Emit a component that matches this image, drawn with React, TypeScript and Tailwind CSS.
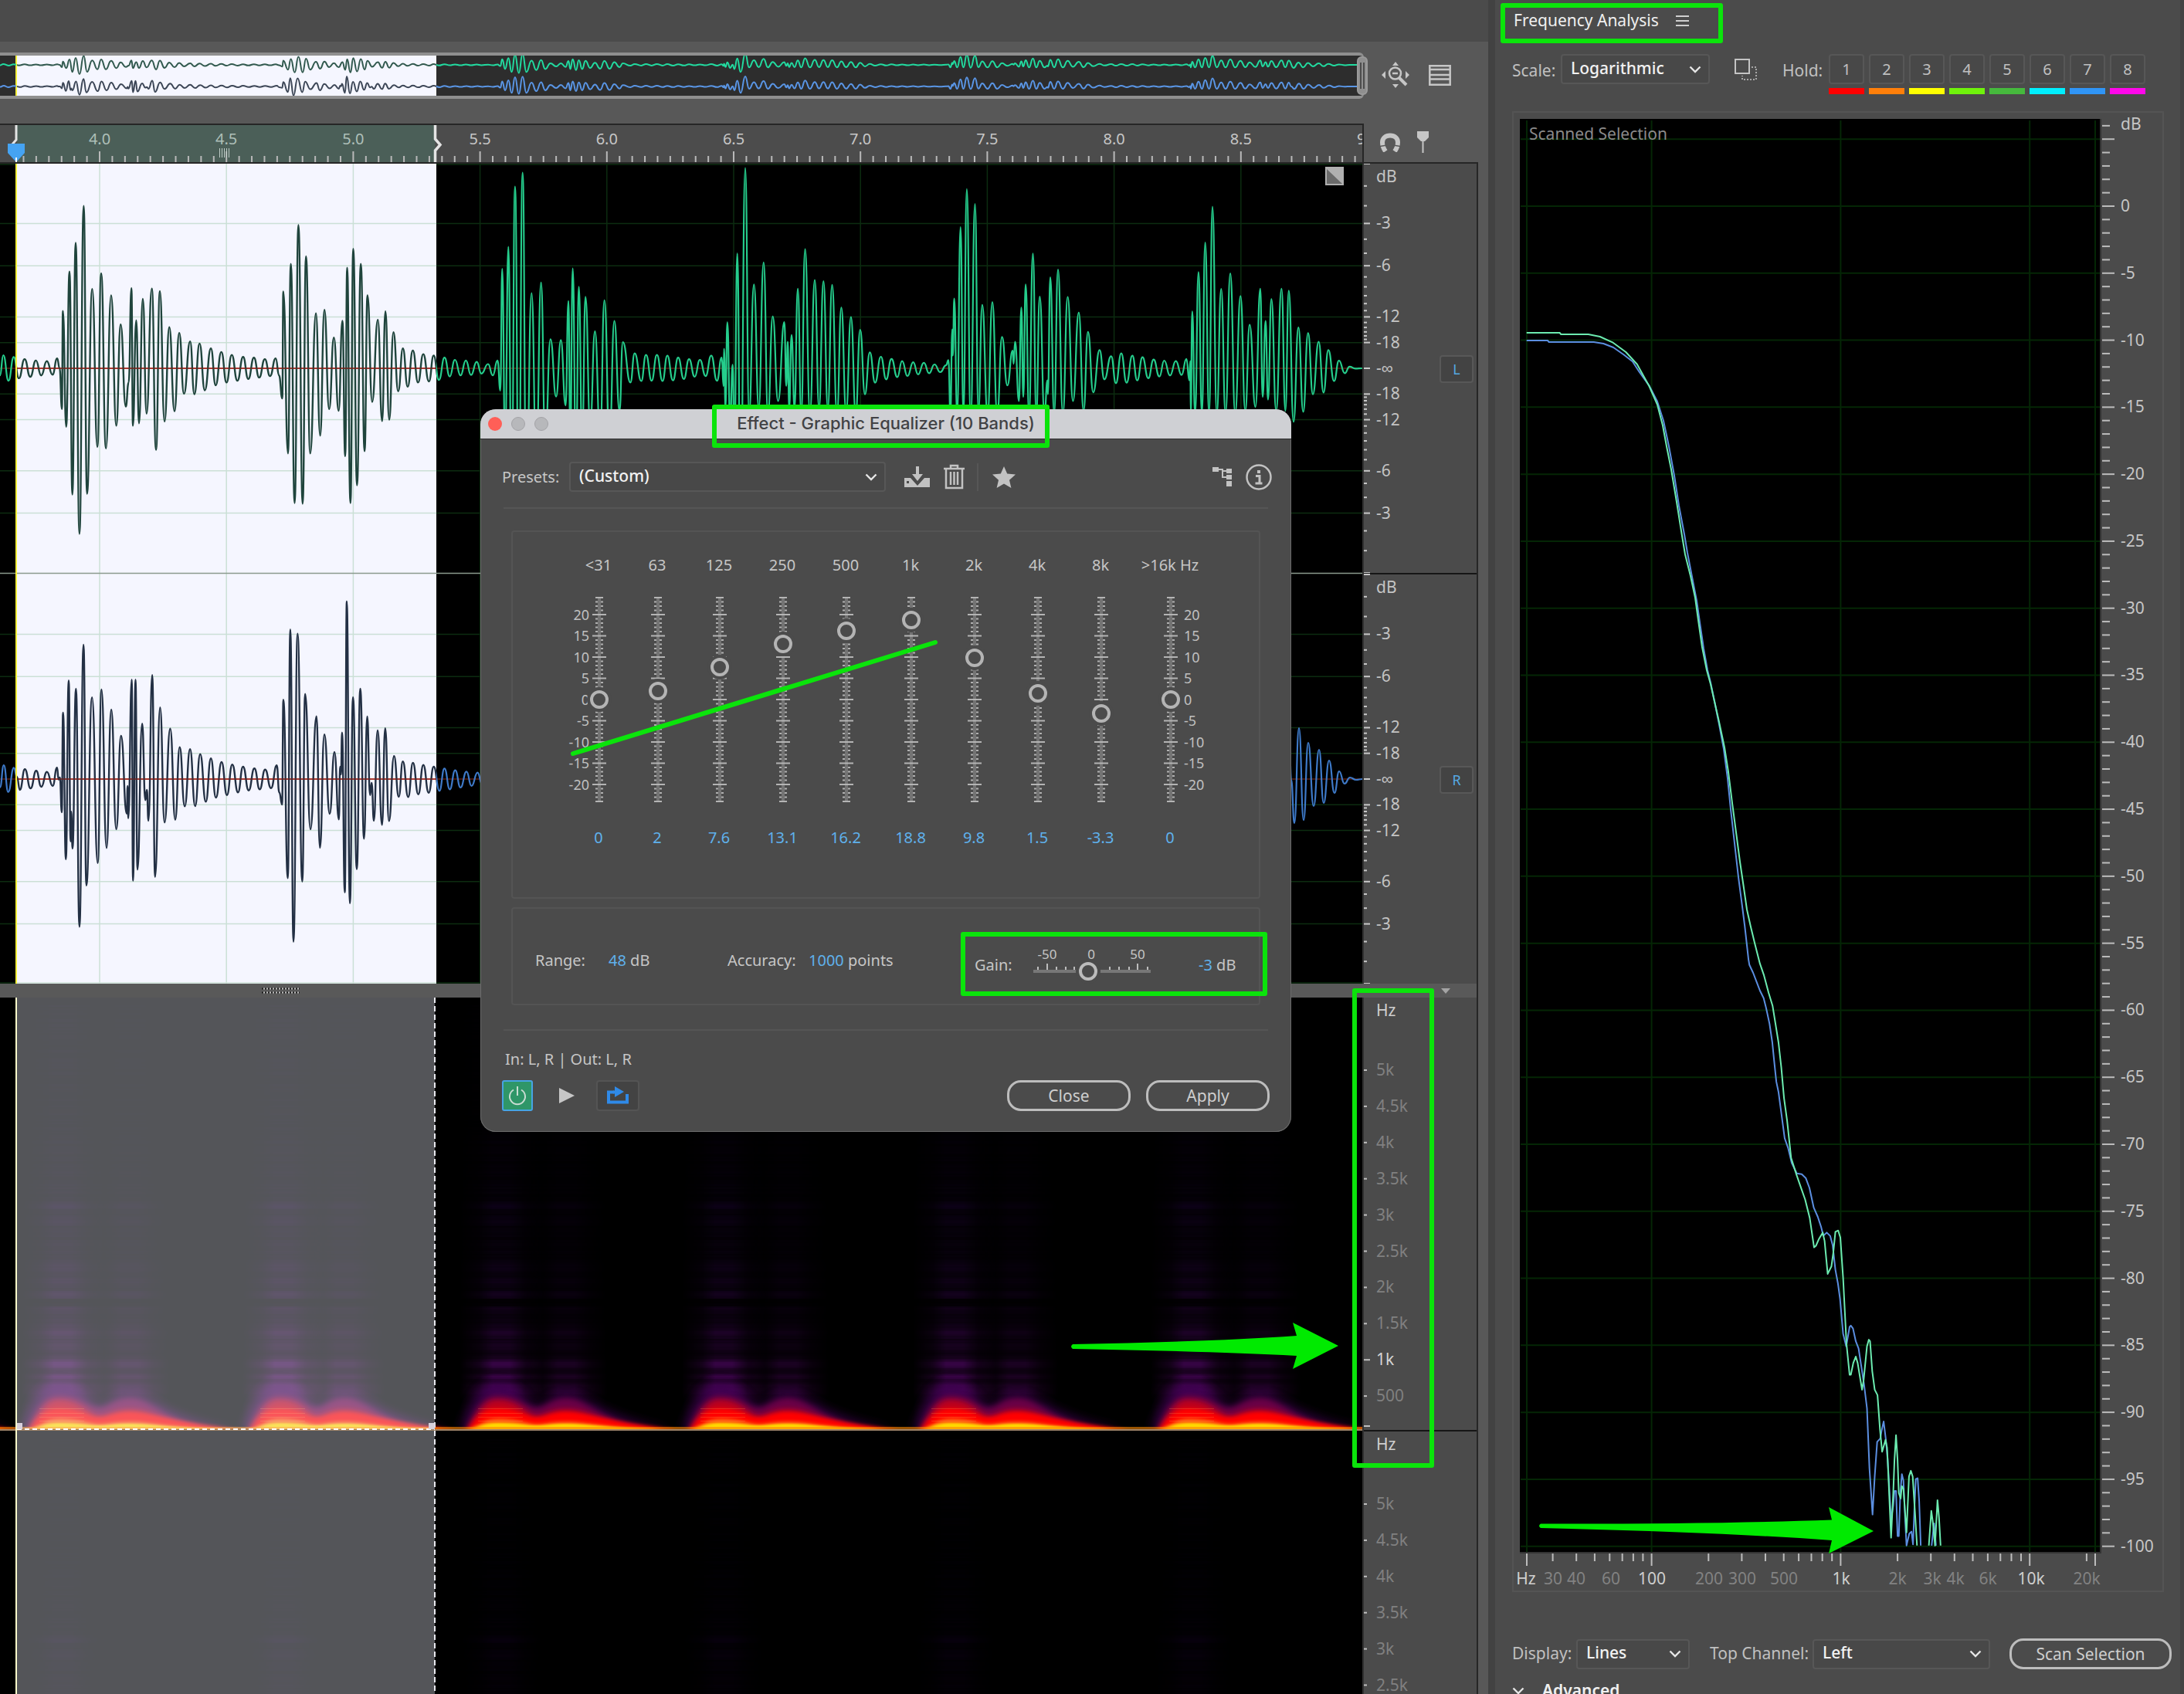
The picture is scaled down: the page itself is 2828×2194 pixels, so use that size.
import React, { useState } from "react";

type Point = [number, number];

/* ---------- geometry helpers ---------- */

const toPoints = (flat: number[], ox: number, sx: number, oy: number, sy: number): Point[] => {
  const out: Point[] = [];
  for (let i = 0; i < flat.length; i += 2) out.push([ox + flat[i] / sx, oy + flat[i + 1] / sy]);
  return out;
};

const wavePath = (pts: Point[]) =>
  pts
    .map(([x, y], i) => {
      if (i === 0) return `M${x.toFixed(1)} ${y.toFixed(1)}`;
      const [px, py] = pts[i - 1];
      const mx = ((px + x) / 2).toFixed(1);
      return `C${mx} ${py.toFixed(1)} ${mx} ${y.toFixed(1)} ${x.toFixed(1)} ${y.toFixed(1)}`;
    })
    .join("");

const linePath = (pts: Point[]) =>
  pts.map(([x, y], i) => `${i ? "L" : "M"}${x.toFixed(1)} ${y.toFixed(1)}`).join("");

/* ---------- audio data: alternating peaks and troughs ---------- */

const leftA = [
  0, 1060, 7, 1003, 18, 1075, 29, 1008, 40, 1068, 52, 1014, 64, 1064, 76, 1018, 87, 1060, 99, 1020, 111, 1058, 121, 1012,
  126, 1040, 131, 1155, 133, 878, 140, 1205, 147, 767, 153, 1396, 160, 686, 168, 1507, 177, 582, 184, 1394, 195, 816, 206,
  1262, 214, 772, 224, 1266, 235, 834, 246, 1202, 255, 916, 266, 1148, 272, 1080, 278, 814, 281, 1202, 288, 905, 294, 1195,
  302, 844, 310, 1168, 321, 815, 330, 1270, 338, 822, 348, 1190, 358, 924, 369, 1161, 379, 940, 389, 1112, 402, 964, 411,
  1113, 422, 970, 433, 1102, 446, 984, 456, 1088, 468, 994, 479, 1080, 490, 1002, 502, 1075, 514, 1008, 525, 1070, 537,
  1010, 548, 1066, 560, 1014, 571, 1062, 583, 1012, 590, 1060, 597, 1125, 599, 823, 609, 1280, 615, 745, 623, 1420, 631,
  636, 640, 1422, 647, 724, 656, 1280, 668, 885, 677, 1230, 686, 875, 696, 1155, 706, 953, 716, 1160, 724, 906, 730, 1288,
  734, 756, 741, 1420, 747, 703, 755, 1370, 763, 745, 771, 1274, 777, 834, 787, 1135, 799, 903, 808, 1189, 815, 879, 823,
  1185, 832, 938, 842, 1105, 852, 984, 862, 1092, 873, 990, 884, 1080, 895, 1000, 907, 1077, 917, 1004, 928, 1073, 940,
  1010, 951, 1063, 962, 1016, 974, 1060, 985, 1018, 996, 1059, 1008, 1022, 1018, 1055, 1032, 1028, 1042, 1060, 1052, 1018,
  1058, 1103, 1062, 759, 1068, 1250, 1075, 697, 1082, 1400, 1089, 527, 1097, 1450, 1105, 488, 1113, 1400, 1124, 828, 1134,
  1300, 1144, 798, 1153, 1250, 1164, 958, 1176, 1120, 1186, 960, 1196, 1145, 1202, 850, 1206, 1250, 1211, 758, 1218, 1300,
  1224, 810, 1231, 1250, 1238, 838, 1248, 1200, 1258, 936, 1269, 1230, 1278, 848, 1289, 1240, 1299, 906, 1310, 1160, 1317,
  966, 1333, 1080, 1342, 998, 1356, 1076, 1366, 1002, 1378, 1075, 1389, 1002, 1401, 1076, 1411, 1004, 1423, 1074, 1434,
  1010, 1446, 1070, 1457, 1014, 1469, 1064, 1480, 1016, 1492, 1062, 1504, 1004, 1516, 1075, 1526, 1010, 1530, 1090, 1531,
  985, 1534, 1150, 1538, 910, 1544, 1200, 1549, 1030, 1553, 1250, 1559, 716, 1566, 1400,
];

const leftB = [
  8, 610, 16, 1500, 26, 1032, 36, 1480, 46, 952, 55, 1500, 65, 1148, 76, 1455, 89, 1168, 93, 1400, 96, 1240, 99, 1480, 104,
  1215, 110, 1480, 117, 1047, 124, 1500, 132, 904, 142, 1500, 152, 1016, 161, 1480, 170, 1020, 179, 1480, 188, 1033, 198,
  1500, 207, 1116, 217, 1490, 227, 1150, 237, 1500, 246, 1196, 256, 1430, 266, 1278, 277, 1388, 289, 1294, 300, 1376, 311,
  1302, 323, 1368, 333, 1310, 344, 1364, 356, 1314, 366, 1358, 378, 1316, 389, 1354, 400, 1322, 412, 1350, 424, 1325, 429,
  1306, 433, 1500, 437, 1195, 438, 1290, 441, 1083, 447, 1500, 454, 824, 460, 1500, 467, 686, 475, 1520, 484, 740, 491,
  1490, 499, 1106, 510, 1500, 520, 1096, 530, 1500, 540, 1222, 551, 1398, 562, 1272, 564, 1320, 567, 1240, 575, 1455, 580,
  1116, 584, 1440, 589, 1032, 596, 1500, 604, 920, 611, 1500, 618, 1076, 628, 1500, 634, 1380, 635, 1430, 640, 1006, 648,
  1500, 656, 978, 666, 1500, 676, 1077, 687, 1455, 699, 1134, 709, 1490, 718, 1204, 729, 1423, 742, 1270, 752, 1376, 766,
  1292, 776, 1390, 787, 1282, 798, 1388, 810, 1290, 820, 1380, 831, 1296, 843, 1372, 854, 1304, 866, 1366, 876, 1308, 888,
  1362, 900, 1310, 912, 1360, 922, 1302, 928, 1380, 930, 1310, 931, 1500, 934, 1130, 940, 1500, 947, 987, 954, 1500, 961,
  880, 969, 1500, 976, 750, 985, 1500, 994, 1048, 1003, 1500, 1013, 992, 1023, 1500, 1034, 1074, 1044, 1490, 1053, 1178,
  1065, 1476, 1075, 1047, 1080, 1440, 1086, 1164, 1091, 1450, 1098, 1085, 1108, 1490, 1119, 1047, 1127, 1490, 1134, 1054,
  1144, 1530, 1154, 1188, 1164, 1494, 1174, 1208, 1184, 1430, 1196, 1240, 1206, 1424, 1216, 1270, 1228, 1382, 1238, 1308,
  1250, 1354, 1260, 1330, 1272, 1337, 1286, 1336,
];

const rightA = [
  0, 840, 12, 754, 26, 858, 44, 764, 54, 800, 63, 850, 79, 770, 97, 844, 115, 776, 131, 838, 149, 780, 167, 835, 181, 764,
  186, 810, 190, 802, 196, 937, 200, 550, 209, 1120, 218, 425, 224, 1050, 226, 935, 230, 1078, 241, 457, 252, 1382, 265,
  286, 274, 1222, 292, 491, 310, 1134, 322, 460, 338, 1076, 353, 538, 369, 1003, 384, 640, 402, 942, 405, 835, 407, 960,
  418, 422, 422, 1203, 430, 422, 436, 1160, 451, 593, 461, 890, 466, 850, 471, 970, 483, 404, 492, 1188, 508, 530, 522,
  977, 540, 612, 556, 966, 570, 684, 586, 914, 603, 692, 619, 913, 635, 711, 653, 896, 669, 728, 685, 880, 703, 742, 720,
  870, 737, 752, 755, 860, 771, 760, 789, 852, 807, 767, 824, 848, 841, 771, 860, 843, 878, 755, 886, 860, 895, 907, 899,
  500, 913, 1193, 921, 227, 931, 1440, 944, 243, 959, 1206, 968, 477, 985, 1003, 1004, 564, 1015, 1075, 1029, 635, 1046,
  943, 1061, 703, 1075, 965, 1079, 760, 1082, 790, 1085, 627, 1094, 1248, 1100, 118, 1110, 1291, 1120, 490, 1132, 1158,
  1143, 457, 1155, 1040, 1165, 565, 1174, 870, 1179, 823, 1186, 970, 1198, 619, 1212, 986, 1222, 611, 1234, 971, 1250, 719,
  1265, 877, 1278, 740, 1295, 878, 1310, 745, 1327, 867, 1343, 753, 1360, 861, 1376, 760, 1394, 854, 1410, 767, 1427, 848,
  1444, 774, 1461, 841, 1480, 779, 1496, 835, 1515, 783, 1530, 830,
];

const rightTail: Point[] = [
  [1672, 1010], [1676, 1066], [1682, 943], [1688, 1062], [1694, 962], [1701, 1044], [1708, 971], [1714, 1040], [1721, 985],
  [1728, 1027], [1734, 999], [1741, 1015], [1748, 1007], [1756, 1010], [1764, 1009],
];

const LEFT_MID = 477;
const RIGHT_MID = 1009;

const leftWave: Point[] = [
  ...toPoints(leftA, 0, 1.633, LEFT_MID - 1040 / 2.178, 2.178),
  ...toPoints(leftB, 960, 1.6, LEFT_MID - 1336 / 2.8, 2.8),
];
const rightHead = toPoints(rightA, 0, 2.45, RIGHT_MID - 808 / 3, 3);
const rightWave: Point[] = [
  ...rightHead,
  ...leftWave
    .filter(([x]) => x > 626 && x < 1671)
    .map(([x, y]): Point => [x, RIGHT_MID + (y - LEFT_MID) * 0.9]),
  ...rightTail,
];

const overview = (pts: Point[], mid: number, to: number): Point[] => pts.map(([x, y]) => [x, to + (y - mid) * 0.056]);
const leftWaveD = wavePath(leftWave);
const rightWaveD = wavePath(rightWave);
const leftOverD = wavePath(overview(leftWave, LEFT_MID, 12));
const rightOverD = wavePath(overview(rightWave, RIGHT_MID, 40));

/* ---------- frequency analysis curves ---------- */

const greenTop = [98, 1293, 172, 1293, 175, 1299, 236, 1299, 262, 1308, 290, 1330, 320, 1368, 345, 1415, 372, 1500];
const blueTop = [98, 1323, 145, 1323, 148, 1329, 248, 1329, 270, 1335, 292, 1350, 315, 1378, 335, 1405, 350, 1445, 372, 1498];
const greenMid: Point[] = [
  [2146, 524], [2153, 551], [2158, 578], [2164, 608], [2171, 650], [2178, 694], [2182, 718], [2189, 746], [2195, 774],
  [2199, 803], [2204, 838], [2210, 868], [2215, 886], [2219, 904], [2226, 935], [2233, 968], [2238, 1000], [2243, 1040],
  [2248, 1078], [2253, 1116], [2258, 1150], [2262, 1178],
];
const blueMid: Point[] = [
  [2146, 520], [2154, 545], [2161, 578], [2168, 616], [2174, 655], [2181, 692], [2185, 716], [2190, 742], [2197, 778],
  [2201, 806], [2206, 840], [2211, 868], [2215, 884], [2220, 908], [2226, 938], [2232, 970], [2237, 1008], [2241, 1048],
  [2246, 1092], [2251, 1136], [2256, 1174],
];
const greenLow = [
  167, 0, 180, 40, 197, 90, 210, 118, 225, 160, 238, 192, 257, 280, 266, 340, 275, 415, 285, 470, 298, 560, 315, 600, 328,
  628, 343, 660, 358, 705, 372, 776, 378, 772, 388, 755, 400, 740, 406, 760, 416, 840, 428, 822, 434, 790, 441, 738, 450,
  735, 457, 752, 466, 850, 477, 1010, 487, 1084, 491, 1084, 499, 1055, 507, 1040, 513, 1055, 527, 1120, 532, 1098, 543,
  1015, 549, 999, 553, 1003, 560, 1075, 568, 1120, 577, 1133, 585, 1215, 592, 1270, 603, 1241, 608, 1260, 613, 1340, 621,
  1478, 628, 1370, 632, 1290, 637, 1230, 642, 1290, 646, 1370, 652, 1383, 656, 1353, 661, 1360, 671, 1465, 679, 1330, 685,
  1316, 691, 1330, 697, 1400, 705, 1497,
];
const greenEnd = [743, 1497, 751, 1413, 756, 1440, 763, 1497, 771, 1387, 776, 1430, 781, 1497];
const blueLow = [
  148, 0, 160, 80, 163, 93, 175, 112, 197, 155, 209, 173, 217, 197, 228, 235, 237, 280, 243, 325, 250, 375, 257, 400, 277,
  512, 288, 535, 300, 572, 316, 597, 332, 599, 345, 608, 357, 632, 371, 680, 384, 702, 395, 727, 402, 748, 413, 740, 424,
  748, 432, 770, 441, 830, 449, 862, 456, 900, 466, 985, 476, 1015, 487, 968, 491, 965, 498, 972, 507, 1003, 516, 1020,
  524, 1060, 534, 1110, 543, 1165, 551, 1310, 561, 1422, 568, 1330, 576, 1246, 586, 1238, 590, 1220, 597, 1197, 604, 1240,
  610, 1290, 621, 1435, 628, 1400, 632, 1365, 637, 1365, 642, 1474, 646, 1474, 651, 1370, 656, 1324, 661, 1340, 667, 1440,
  671, 1497, 680, 1468, 687, 1463, 692, 1494, 697, 1400, 701, 1336, 707, 1334, 712, 1390, 717, 1497,
];
const blueEnd = [752, 1497, 760, 1443, 766, 1497];

const top = (f: number[]) => toPoints(f, 1920, 1.727, 0, 3);
const low = (f: number[]) => toPoints(f, 2200, 2.497, 1200, 1.867);
const greenCurve = linePath([...top(greenTop), ...greenMid, ...low(greenLow)]) + linePath(low(greenEnd));
const blueCurve = linePath([...top(blueTop), ...blueMid, ...low(blueLow)]) + linePath(low(blueEnd));

/* ---------- small building blocks ---------- */

function Chevron({ className = "" }: { className?: string }) {
  return (
    <svg className={className} width="16" height="10" viewBox="0 0 16 10" fill="none" stroke="#e6e6e6" strokeWidth="2.4">
      <path d="M1.5 1.5 L8 8 L14.5 1.5" />
    </svg>
  );
}

function Dropdown({ id, value, className }: { id: string; value: string; className: string }) {
  return (
    <div className={`relative flex items-center ${className}`}>
      <select
        id={id}
        className="h-[39px] w-full appearance-none rounded-[4px] border-2 border-[#575757] bg-[#484848] pb-[2px] pl-[11px] text-[21px] font-medium text-[#f2f2f2] outline-none"
      >
        <option>{value}</option>
      </select>
      <Chevron className="pointer-events-none absolute right-[11px]" />
    </div>
  );
}

function PillButton({ children, className }: { children: React.ReactNode; className: string }) {
  return (
    <button className={`h-10 shrink-0 whitespace-nowrap rounded-[18px] border-[3px] border-[#bdbdbd] text-[21px] leading-none text-[#cecece] ${className}`}>
      {children}
    </button>
  );
}

/* ---------- overview strip and time ruler ---------- */

function OverviewStrip() {
  return (
    <div className="relative h-[60px] min-w-0 flex-1">
      <div className="mr-[5px] h-[60px] overflow-hidden rounded-r-[6px] border-y-4 border-r-2 border-[#8f8f8f] bg-[#2d2d2d]">
        <svg className="block h-[52px] w-full" fill="none">
          <defs>
            <clipPath id="ov-sel"><rect x="22" y="0" width="543" height="52" /></clipPath>
            <clipPath id="ov-out"><rect x="0" y="0" width="21" height="52" /><rect x="565" y="0" width="2400" height="52" /></clipPath>
          </defs>
          <rect x="22" y="0" width="543" height="52" fill="#f5f6ff" />
          <rect x="20" y="0" width="2" height="52" fill="#f6f03c" />
          <g clipPath="url(#ov-out)" strokeWidth="2">
            <path d={leftOverD} stroke="#22dba0" />
            <path d={rightOverD} stroke="#5a96e6" />
          </g>
          <g clipPath="url(#ov-sel)" strokeWidth="2">
            <path d={leftOverD} stroke="#31594e" />
            <path d={rightOverD} stroke="#3c4656" />
          </g>
        </svg>
      </div>
      <div className="absolute right-0 top-[5px] flex h-[50px] w-[14px] items-center justify-center gap-[2px] rounded-[6px] border-2 border-[#9a9a9a] bg-[#8f8f8f]">
        <span className="h-[34px] w-[2px] bg-[#4c4c4c]" />
        <span className="h-[34px] w-[2px] bg-[#4c4c4c]" />
      </div>
    </div>
  );
}

function TimeRuler() {
  const labels = ["4.0", "4.5", "5.0", "5.5", "6.0", "6.5", "7.0", "7.5", "8.0", "8.5", "9.0"];
  const ticks = Array.from({ length: 108 }, (_, i) => i - 6);
  return (
    <svg className="block h-[48px] w-full" fontSize="20">
      <rect x="22" y="0" width="543" height="48" fill="#4b5f58" />
      {ticks.map((i) => {
        const major = i % 10 === 0;
        return <rect key={i} x={128 + i * 16.42} y={major ? 34 : 40} width="2" height={major ? 14 : 8} fill="#b9b9b9" />;
      })}
      {labels.map((l, i) => (
        <text key={l} x={129 + i * 164.2} y="25" textAnchor="middle" fill={i < 3 ? "#aebfb8" : "#c6c6c6"}>
          {l}
        </text>
      ))}
      {[0, 1, 2, 3, 4].map((i) => (
        <rect key={i} x={284 + i * 3} y="30" width="1" height="12" fill="#c0cdc8" />
      ))}
      <path d="M21 0 V19 L15 26" fill="none" stroke="#e4e4e4" strokeWidth="3" />
      <path d="M563.5 0 V18 L570 25.500 L563.5 33 V48" fill="#4c4c4c" stroke="#e4e4e4" strokeWidth="3.500" />
      <path d="M10 24 H32 V36 L21 48 L10 36 Z" fill="#45a3f2" />
      <rect x="20" y="42" width="2" height="6" fill="#fff" />
    </svg>
  );
}

/* ---------- waveform display ---------- */

const DB = (n: number) => 265 * Math.pow(10, -n / 20);

function Waveforms() {
  const levels = [3, 6, 12, 18].flatMap((d) => [-DB(d), DB(d)]);
  const rows = [LEFT_MID, RIGHT_MID].flatMap((m) => levels.map((l) => m + l));
  const cols = Array.from({ length: 10 }, (_, i) => 129 + i * 164.2);
  return (
    <svg className="block h-[1062px] w-full bg-black" fill="none">
      <defs>
        <clipPath id="wf-sel"><rect x="22" y="212" width="543" height="1062" /></clipPath>
        <clipPath id="wf-out"><rect x="0" y="212" width="22" height="1062" /><rect x="565" y="212" width="2400" height="1062" /></clipPath>
      </defs>
      <g transform="translate(0 -212)">
        <g stroke="#0c2c10" strokeWidth="1.500">
          {rows.map((y) => <path key={y} d={`M0 ${y}H2800`} />)}
          {cols.map((x) => <path key={x} d={`M${x} 212V1274`} />)}
          <path d="M0 213H2800M0 1273H2800" />
        </g>
        <path d={`M0 ${LEFT_MID}H2800M0 ${RIGHT_MID}H2800`} stroke="#5c1f12" strokeWidth="1.500" />
        <rect x="22" y="212" width="543" height="1062" fill="#f5f6ff" />
        <g clipPath="url(#wf-sel)">
          <g stroke="#cbe0d6" strokeWidth="1.500">
            {rows.map((y) => <path key={y} d={`M0 ${y}H600`} />)}
            {cols.slice(0, 3).map((x) => <path key={x} d={`M${x} 212V1274`} />)}
            <path d="M0 1273H600" />
          </g>
        </g>
        <path d="M0 742.500H2800" stroke="#8b9a8d" strokeWidth="1.500" />
        <g clipPath="url(#wf-out)" strokeWidth="2.200">
          <path d={leftWaveD} stroke="#25cd8c" />
          <path d={rightWaveD} stroke="#3e7ac9" />
        </g>
        <g clipPath="url(#wf-sel)" strokeWidth="2.400">
          <path d={`M0 ${LEFT_MID}H600M0 ${RIGHT_MID}H600`} stroke="#d8554a" strokeWidth="2" />
          <path d={leftWaveD} stroke="#1f443c" />
          <path d={rightWaveD} stroke="#233044" />
          <path d={`M0 ${LEFT_MID}H600M0 ${RIGHT_MID}H600`} stroke="#7c2018" strokeWidth="1" />
        </g>
        <rect x="20" y="212" width="2" height="1062" fill="#f7f03a" />
        <rect x="1716" y="216" width="24" height="24" fill="#b0b0b0" />
        <path d="M1718 219 V238 H1738 Z" fill="#6a6a6a" />
      </g>
    </svg>
  );
}

function ChannelScale({ top: y0 }: { top: number }) {
  const mid = y0 + 265;
  const labels: [number, string][] = [
    [-DB(3), "-3"], [-DB(6), "-6"], [-DB(12), "-12"], [-DB(18), "-18"], [0, "-∞"],
    [DB(18), "-18"], [DB(12), "-12"], [DB(6), "-6"], [DB(3), "-3"],
  ];
  const marks = Array.from({ length: 19 }, (_, i) => i);
  return (
    <g>
      <text x="16" y={y0 + 24}>dB</text>
      {labels.map(([dy, l], i) => <text key={i} x="16" y={mid + dy + 7}>{l}</text>)}
      {marks.flatMap((d) =>
        [-1, 1].map((s) => (
          <rect key={`${d}${s}`} x="0" y={mid + s * DB(d) - 1} height="2" width={[0, 3, 6, 12, 18].includes(d) ? 8 : 4} fill="#c8c8c8" />
        )),
      )}
      <rect x="0" y={mid - 1} width="8" height="2" fill="#c8c8c8" />
    </g>
  );
}

function DecibelScale() {
  return (
    <div className="relative w-[146px] shrink-0 bg-[#4b4b4b]">
      <svg className="block h-[1062px] w-full" fontSize="21" fill="#c4c4c4">
        <ChannelScale top={0} />
        <rect x="0" y="530" width="146" height="2" fill="#161616" />
        <ChannelScale top={532} />
      </svg>
      <button className="absolute right-1 top-[248px] h-9 w-11 rounded-[4px] border-2 border-[#585858] bg-[#434343] text-[18px] leading-none text-[#55a9e4]">L</button>
      <button className="absolute right-1 top-[780px] h-9 w-11 rounded-[4px] border-2 border-[#585858] bg-[#434343] text-[18px] leading-none text-[#55a9e4]">R</button>
    </div>
  );
}

/* ---------- spectral display ---------- */

const bursts = [
  [-205, -120], [81, 168], [367, 446], [649, 733], [937, 1020], [1236, 1317], [1544, 1631],
];

const noise = (n: number) => {
  const s = Math.sin(n * 12.9898) * 43758.5453;
  return s - Math.floor(s);
};

const bands: [number, number, number][] = [
  [1561, 5, 0.1], [1580, 6, 0.06], [1640, 6, 0.07], [1658, 5, 0.06], [1676, 5, 0.12], [1694, 5, 0.06], [1725, 7, 0.14],
  [1742, 5, 0.08], [1766, 6, 0.32], [1782, 4, 0.26], [1795, 6, 0.26], [1803, 5, 0.3],
];

const stripes = Array.from({ length: 276 }, (_, i) => {
  const y = 1300 + i * 2;
  const t = (y - 1292) / 560;
  let v = 0.02 + 0.13 * t * t + 0.4 * Math.pow(t, 12);
  v += (noise(i) - 0.5) * (0.03 + 0.08 * Math.pow(t, 4));
  bands.forEach(([c, w, a]) => { v += a * Math.exp(-Math.pow((y - c) / w, 2)); });
  if (Math.abs(y - 1686) < 5) v *= 0.3;
  const red = Math.round(64 + 66 * t * t);
  const blue = Math.round(150 - 10 * t);
  return { y, c: `rgb(${red},8,${blue})`, v: Math.max(0.008, Math.min(v, 0.9)) };
});

const hump = (a: number, b: number, h1: number, h2: number, l: number, r: number) => {
  const m = a + (b - a) * 0.55;
  const dip = Math.min(h1, h2) * 0.68;
  return `M${a - l} 1853 C${a - l * 0.8} ${1852 - h1 * 0.4} ${a - l * 0.6} ${1851 - h1} ${a - 6} ${1851 - h1} C${a + 26} ${1851 - h1} ${m - 14} ${1851 - dip} ${m} ${1851 - dip} C${m + 10} ${1851 - dip} ${b - 20} ${1851 - h2} ${b} ${1851 - h2} C${b + 28} ${1851 - h2} ${b + r * 0.35} ${1851 - h2 * 0.4} ${b + r} 1851 V1853 Z`;
};

const layers: [number, number, number, number, string, string, number][] = [
  [60, 44, 54, 130, "#3c0050", "blur6", 0.8],
  [44, 40, 44, 100, "#780046", "blur3", 0.8],
  [38, 26, 42, 120, "#c80018", "blur3", 0.9],
  [27, 22, 44, 140, "#ff0000", "blur2", 1],
  [14, 10, 36, 110, "#ff6a10", "blur2", 0.95],
  [8, 7, 42, 120, "#ffd800", "blur1", 1],
];

function Spectrogram() {
  return (
    <svg className="block h-full w-full bg-black">
      <defs>
        <filter id="blur6" x="-20%" y="-60%" width="140%" height="220%"><feGaussianBlur stdDeviation="7" /></filter>
        <filter id="blur3" x="-20%" y="-60%" width="140%" height="220%"><feGaussianBlur stdDeviation="5 3" /></filter>
        <filter id="blur2" x="-20%" y="-60%" width="140%" height="220%"><feGaussianBlur stdDeviation="4 2" /></filter>
        <filter id="blur1" x="-20%" y="-60%" width="140%" height="220%"><feGaussianBlur stdDeviation="6 1" /></filter>
        <linearGradient id="fade">
          <stop offset="0" stopColor="#000" />
          <stop offset="0.24" stopColor="#666" />
          <stop offset="0.4" stopColor="#fff" />
          <stop offset="0.6" stopColor="#fff" />
          <stop offset="0.78" stopColor="#666" />
          <stop offset="1" stopColor="#000" />
        </linearGradient>
        <mask id="column-mask" maskUnits="userSpaceOnUse" x="-54" y="1292" width="108" height="560">
          <rect x="-54" y="1292" width="108" height="560" fill="url(#fade)" />
        </mask>
        <g id="column" mask="url(#column-mask)">
          {stripes.map((s) => <rect key={s.y} x="-54" y={s.y} width="108" height="2" fill={s.c} opacity={s.v} />)}
        </g>
        <clipPath id="top-channel"><rect x="0" y="1292" width="2800" height="559" /></clipPath>
      </defs>
      <g transform="translate(0 -1292)">
        <g clipPath="url(#top-channel)">
          {bursts.map(([a, b]) => (
            <g key={a}>
              <use href="#column" x={a} />
              <use href="#column" x={b} opacity="0.5" />
              {layers.map(([h1, h2, l, r, c, f, o], i) => (
                <path key={i} d={hump(a, b, h1, h2, l, r)} fill={c} filter={`url(#${f})`} opacity={o} />
              ))}
              {[1824, 1830, 1835, 1840].map((y) => (
                <rect key={y} x={a - 30} y={y} width="58" height="1" fill="#ff9a50" opacity="0.25" />
              ))}
            </g>
          ))}
          <rect x="0" y="1848" width="2800" height="3" fill="#ff8a00" opacity="0.6" />
        </g>
        {bursts.map(([a]) => <use key={a} href="#column" x={a} y="562" opacity="0.6" />)}
        <rect x="22" y="1292" width="541" height="1100" fill="#f2f3ff" opacity="0.35" />
        <rect x="0" y="1851" width="2800" height="2" fill="#a08468" />
        <rect x="20" y="1292" width="2" height="1100" fill="#fbfacb" />
        <path d="M563 1292V2400" stroke="#e8e8ee" strokeWidth="2" strokeDasharray="7 4" />
        <path d="M22 1851H563" stroke="#fff" strokeWidth="2" strokeDasharray="6 4" />
        <rect x="22" y="1843" width="7" height="8" fill="#d8d0dc" />
        <rect x="555" y="1843" width="8" height="8" fill="#d8d0dc" />
      </g>
    </svg>
  );
}

function HertzScale() {
  const labels = ["5k", "4.5k", "4k", "3.5k", "3k", "2.5k", "2k", "1.5k", "1k", "500"];
  const channel = (y0: number, shown: string[]) => (
    <g key={y0}>
      <text x="16" y={y0 + 24} fill="#cfcfcf">Hz</text>
      {shown.map((l, i) => {
        const y = y0 + 94 + i * 46.9;
        const major = l === "1k";
        return (
          <g key={l}>
            <rect x="0" y={y - 1} width={major ? 8 : 4} height="2" fill="#c0c0c0" />
            <text x="16" y={y + 7} fill={major ? "#d4d4d4" : "#808080"}>{l}</text>
          </g>
        );
      })}
      <rect x="0" y={y0 + 554} width="8" height="2" fill="#c0c0c0" />
      <rect x="0" y={y0 + 560} width="146" height="2" fill="#161616" />
    </g>
  );
  return (
    <div className="w-[146px] shrink-0 bg-[#4b4b4b]">
      <svg className="block h-full w-full" fontSize="21">
        {channel(0, labels)}
        {channel(562, labels.slice(0, 6))}
      </svg>
    </div>
  );
}

/* ---------- equalizer window ---------- */

const eqBands: [string, number][] = [
  ["<31", 0], ["63", 2], ["125", 7.6], ["250", 13.1], ["500", 16.2], ["1k", 18.8], ["2k", 9.8], ["4k", 1.5], ["8k", -3.3], [">16k Hz", 0],
];

function BandTicks() {
  return (
    <svg className="absolute inset-0 h-[288px] w-6">
      <rect x="10" y="12" width="4" height="264" fill="#747474" />
      {Array.from({ length: 49 }, (_, i) => {
        const n = i - 24;
        const y = 143 + n * 5.5;
        if (n % 5 === 0) return <rect key={i} x="3" y={y} width="18" height="2" fill="#b4b4b4" />;
        if (Math.abs(n) === 24) return <rect key={i} x="7" y={y} width="10" height="2" fill="#b4b4b4" />;
        return (
          <g key={i} fill="#b0b0b0">
            <rect x="7" y={y} width="3" height="2" />
            <rect x="14" y={y} width="3" height="2" />
          </g>
        );
      })}
    </svg>
  );
}

function BandScale({ side }: { side: "left" | "right" }) {
  const left = side === "left";
  return (
    <svg className={left ? "absolute right-full top-0 h-[288px] w-10" : "absolute left-full top-0 h-[288px] w-10"} fontSize="18" fill="#c0c0c0">
      {[20, 15, 10, 5, 0, -5, -10, -15, -20].map((n) => (
        <text key={n} x={left ? 39 : 5} y={150.5 - n * 5.5} textAnchor={left ? "end" : "start"}>{n}</text>
      ))}
    </svg>
  );
}

function Band({ label, initial, index }: { label: string; initial: number; index: number }) {
  const [value, setValue] = useState(initial);
  return (
    <div className="flex flex-col items-center">
      <label htmlFor={`band-${index}`} className="whitespace-nowrap pr-[2px] text-[20px] leading-7 text-[#c6c6c6]">{label}</label>
      <div className="relative mt-4 h-[288px] w-6">
        <BandTicks />
        {index === 0 && <BandScale side="left" />}
        {index === 9 && <BandScale side="right" />}
        <input
          id={`band-${index}`}
          type="range"
          min={-24}
          max={24}
          step={0.1}
          value={value}
          onChange={(e) => setValue(Number(e.target.value))}
          className="absolute inset-0 m-0 h-[288px] w-6 appearance-none bg-transparent [direction:rtl] [writing-mode:vertical-lr] [&::-webkit-slider-runnable-track]:bg-transparent [&::-webkit-slider-thumb]:h-6 [&::-webkit-slider-thumb]:w-6 [&::-webkit-slider-thumb]:appearance-none [&::-webkit-slider-thumb]:rounded-full [&::-webkit-slider-thumb]:border-4 [&::-webkit-slider-thumb]:border-[#b4b4b4] [&::-webkit-slider-thumb]:bg-[#4b4b4b] [&::-webkit-slider-thumb]:shadow-[0_0_0_4px_#4b4b4b]"
        />
      </div>
      <output className="mt-[21px] pr-[2px] text-[20px] leading-7 text-[#5fb1ec]">{value}</output>
    </div>
  );
}

function GainSlider() {
  const [gain, setGain] = useState(-3);
  const ticks: [number, boolean][] = [
    [18, false], [30, true], [42, false], [54, false], [65, false], [111, false], [123, false], [136, false], [147, true], [160, false],
  ];
  return (
    <>
      <div className="relative mt-[49px] h-11 w-[175px]">
        <svg className="absolute inset-0 h-11 w-[175px]" fontSize="17" fill="#c6c6c6" textAnchor="middle">
          <text x="31" y="16">-50</text>
          <text x="88" y="16">0</text>
          <text x="148" y="16">50</text>
          <rect x="13" y="30" width="152" height="4" fill="#777" />
          {ticks.map(([x, big]) => <rect key={x} x={x} y={big ? 22 : 26} width="2" height={big ? 8 : 4} fill="#bdbdbd" />)}
        </svg>
        <input
          id="gain"
          type="range"
          min={-63}
          max={63}
          value={gain}
          onChange={(e) => setGain(Number(e.target.value))}
          className="absolute bottom-0 left-0 m-0 h-6 w-[175px] appearance-none bg-transparent [&::-webkit-slider-thumb]:h-6 [&::-webkit-slider-thumb]:w-6 [&::-webkit-slider-thumb]:appearance-none [&::-webkit-slider-thumb]:rounded-full [&::-webkit-slider-thumb]:border-4 [&::-webkit-slider-thumb]:border-[#bcbcbc] [&::-webkit-slider-thumb]:bg-[#4b4b4b] [&::-webkit-slider-thumb]:shadow-[0_0_0_4px_#4b4b4b]"
        />
      </div>
      <p className="ml-[52px] mt-[59px] leading-7"><output htmlFor="gain" className="text-[#5fb1ec]">{gain}</output> dB</p>
    </>
  );
}

function EqualizerWindow() {
  return (
    <section className="absolute left-[622px] top-[530px] w-[1050px] overflow-hidden rounded-[20px] bg-[#4b4b4b] text-[20px] text-[#c6c6c6] shadow-[inset_0_0_0_1px_#6a6a6a]">
      <header className="relative flex h-[39px] items-center justify-center border-b border-[#2c2c2c] bg-[#cfd0d4]">
        <div className="absolute left-[10px] flex gap-3">
          <button aria-label="Close window" className="h-[18px] w-[18px] rounded-full bg-[#ff5f57]" />
          <button aria-label="Minimize window" className="h-[18px] w-[18px] rounded-full border border-[#a3a3a7] bg-[#b7b8bb]" />
          <button aria-label="Zoom window" className="h-[18px] w-[18px] rounded-full border border-[#a3a3a7] bg-[#b7b8bb]" />
        </div>
        <h2 className="pb-[2px] font-['Inter',sans-serif] text-[22px] font-medium leading-none text-[#424245]">Effect - Graphic Equalizer (10 Bands)</h2>
      </header>

      <div className="px-7 pb-[27px] pt-[29px]">
        <div className="flex items-center">
          <label htmlFor="preset" className="w-[87px]">Presets:</label>
          <Dropdown id="preset" value="(Custom)" className="w-[410px]" />
          <button aria-label="Save preset" className="ml-6">
            <svg width="33" height="28" viewBox="0 0 33 28" fill="#c2c2c2">
              <path d="M15 0h4v10h5l-7 9-7-9h5z" />
              <path d="M0 15h8l9 10 9-10h7v12H0zM3 19v3h3v-3z" fillRule="evenodd" />
            </svg>
          </button>
          <button aria-label="Delete preset" className="ml-[18px]">
            <svg width="27" height="33" viewBox="0 0 27 33" fill="none" stroke="#c2c2c2" strokeWidth="2.500">
              <path d="M0 6h27M9 6V2h9v4M3 6v25h21V6M9 10v17M13.5 10v17M18 10v17" />
            </svg>
          </button>
          <span className="ml-4 h-9 w-[2px] bg-[#565656]" />
          <button aria-label="Favorite" className="ml-[18px]">
            <svg width="30" height="28" viewBox="0 0 30 28" fill="#c2c2c2">
              <path d="M15 0l4.200 9.600 10.800 1-8 7.200 2.400 10.200L15 22.600 5.600 28 8 17.800 0 10.600l10.800-1z" />
            </svg>
          </button>
          <button aria-label="Channel routing" className="ml-auto">
            <svg width="26" height="25" viewBox="0 0 26 25" fill="#c2c2c2">
              <path d="M0 0h8v6H0zM18 2h7v6h-7zM18 10h7v6h-7zM18 18h7v7h-7z" />
              <path d="M8 3h5v10h5M13 5h5" fill="none" stroke="#c2c2c2" strokeWidth="2" />
            </svg>
          </button>
          <button aria-label="Info" className="-mr-[3px] ml-[17px]">
            <svg width="34" height="34" viewBox="0 0 34 34" fill="none" stroke="#c2c2c2" strokeWidth="2.500">
              <circle cx="17" cy="17" r="15.500" />
              <path d="M17 8v4" strokeWidth="4" />
              <path d="M13 15.500h5v9M12.500 25h9" strokeWidth="3" />
            </svg>
          </button>
        </div>

        <hr className="mx-[2px] mt-5 border-t-2 border-[#555]" />

        <div className="mx-3 mt-[28px] h-[477px] rounded-[4px] border-2 border-[#545454] pl-[76px] pt-[29px]">
          <div className="grid grid-cols-[72px_80px_80px_84px_80px_88px_76px_88px_76px_104px]">
            {eqBands.map(([l, v], i) => <Band key={l} label={l} initial={v} index={i} />)}
          </div>
        </div>

        <div className="mx-3 mt-[11px] flex h-[127px] items-start rounded-[4px] border-2 border-[#545454] pl-[29px]">
          <p className="mt-[53px] w-[95px] leading-7">Range:</p>
          <p className="mt-[53px] w-[154px] leading-7"><span className="text-[#5fb1ec]">48</span> dB</p>
          <p className="mt-[53px] w-[105px] leading-7">Accuracy:</p>
          <p className="mt-[53px] w-[215px] leading-7"><span className="text-[#5fb1ec]">1000</span> points</p>
          <label htmlFor="gain" className="mt-[59px] w-[63px] leading-7">Gain:</label>
          <GainSlider />
        </div>

        <hr className="mx-[2px] mt-[31px] border-t-2 border-[#555]" />
        <p className="mt-[23px] pl-1 text-[20px] leading-7">In: L, R | Out: L, R</p>
        <div className="mt-[13px] flex items-center">
          <button aria-label="Power" className="flex h-10 w-10 items-center justify-center rounded-[3px] border-2 border-[#46a4e4] bg-[#2f9668]">
            <svg width="24" height="26" viewBox="0 0 24 26" fill="none" stroke="#c9dcd2" strokeWidth="2">
              <path d="M12 1v12M7 5.500a10 10 0 1 0 10 0" />
            </svg>
          </button>
          <button aria-label="Play" className="ml-[34px]">
            <svg width="20" height="20" viewBox="0 0 20 20"><path d="M0 0L20 10L0 20z" fill="#c6c6c6" /></svg>
          </button>
          <button aria-label="Loop" className="ml-7 flex h-10 w-14 items-center justify-center rounded-[4px] border-2 border-[#545454] bg-[#434343]">
            <svg width="28" height="24" viewBox="0 0 28 24">
              <path d="M9 7.500H2V20.500H26V10" fill="none" stroke="#2f8ae8" strokeWidth="4" />
              <path d="M10 0L22 7L10 14z" fill="#2f8ae8" />
              <path d="M8 5.500h5v4H8z" fill="#2f8ae8" />
            </svg>
          </button>
          <PillButton className="ml-auto w-40">Close</PillButton>
          <PillButton className="ml-5 w-40">Apply</PillButton>
        </div>
      </div>
    </section>
  );
}

/* ---------- frequency analysis panel ---------- */

const holds: [string, string][] = [
  ["1", "bg-[#ff0000]"], ["2", "bg-[#ff7f0a]"], ["3", "bg-[#ffff00]"], ["4", "bg-[#70f20c]"],
  ["5", "bg-[#46b93d]"], ["6", "bg-[#00efff]"], ["7", "bg-[#3095f6]"], ["8", "bg-[#ff08ea]"],
];

function FrequencyChart() {
  const yOf = (db: number) => 267 - db * 17.357;
  const xOf = (f: number) => 2138.6 + 244.8 * Math.log10(f / 100);
  const minor = [30, 40, 50, 60, 70, 80, 90, 200, 300, 400, 500, 600, 700, 800, 900, 2e3, 3e3, 4e3, 5e3, 6e3, 7e3, 8e3, 9e3, 2e4];
  const labels: [number, string, boolean][] = [
    [1976, "Hz", true], [2011, "30", false], [2041, "40", false], [2086, "60", false], [2139, "100", true], [2213, "200", false],
    [2256, "300", false], [2310, "500", false], [2384, "1k", true], [2457, "2k", false], [2502, "3k", false], [2532, "4k", false],
    [2574, "6k", false], [2630, "10k", true], [2702, "20k", false],
  ];
  const majors = Array.from({ length: 22 }, (_, i) => 5 - i * 5);
  const all = Array.from({ length: 107 }, (_, i) => 6 - i);
  return (
    <svg className="block h-[1914px] w-full" fontSize="21" fill="none">
      <g transform="translate(-1960 -146)">
        <rect x="1968" y="154" width="752" height="1857" fill="#000" />
        <g stroke="#042605" strokeWidth="2">
          {majors.map((d) => <path key={d} d={`M1969 ${yOf(d)}H2720`} />)}
          {[1977, xOf(100), xOf(1000), xOf(10000), 2713].map((x) => <path key={x} d={`M${x} 156V2010`} />)}
        </g>
        <path d="M2720 154V2011M1968 2011H2721" stroke="#333" strokeWidth="2" />
        <path d={blueCurve} stroke="#5b8ee0" strokeWidth="2" strokeLinejoin="round" />
        <path d={greenCurve} stroke="#6cebb0" strokeWidth="2" strokeLinejoin="round" />
        <text x="1980" y="181" fill="#8a8a8a">Scanned Selection</text>
        {all.map((d) => (
          <rect key={d} x="2722" y={yOf(d) - 1} width={d % 5 === 0 ? 16 : 10} height="2" fill="#bcbcbc" />
        ))}
        <text x="2746" y="168" fill="#c6c6c6">dB</text>
        {majors.slice(1).map((d) => <text key={d} x="2746" y={yOf(d) + 7} fill="#c6c6c6">{d}</text>)}
        {minor.map((f) => <rect key={f} x={xOf(f) - 1} y="2012" width="2" height="10" fill="#bcbcbc" />)}
        {[1977, xOf(100), xOf(1000), xOf(10000), 2713].map((x) => <rect key={x} x={x - 1} y="2012" width="2" height="16" fill="#bcbcbc" />)}
        {labels.map(([x, l, b]) => (
          <text key={l} x={x} y="2052" textAnchor="middle" fill={b ? "#cfcfcf" : "#828282"}>{l}</text>
        ))}
      </g>
    </svg>
  );
}

function FrequencyPanel() {
  return (
    <aside className="mr-[5px] flex w-[887px] shrink-0 flex-col overflow-hidden bg-[#4b4b4b] pl-[22px] text-[21px] text-[#c0c0c0]">
      <header className="flex h-[54px] shrink-0 items-center gap-[22px] pl-[2px]">
        <h1 className="text-[#f0f0f0]">Frequency Analysis</h1>
        <button aria-label="Panel menu">
          <svg width="17" height="16" viewBox="0 0 17 16" fill="#cfcfcf"><path d="M0 1h17v2H0zM0 7h17v2H0zM0 13h17v2H0z" /></svg>
        </button>
      </header>

      <div className="mt-4 flex h-[52px] shrink-0 items-start">
        <label htmlFor="scale" className="w-[63px] leading-[42px]">Scale:</label>
        <Dropdown id="scale" value="Logarithmic" className="w-[193px]" />
        <button aria-label="Copy graph" className="ml-8 mt-[6px]">
          <svg width="29" height="29" viewBox="0 0 29 29" fill="none" stroke="#c4c4c4" strokeWidth="2">
            <rect x="1" y="1" width="18" height="18" />
            <path d="M22 11H28V27H10V22" stroke="#a8a8a8" strokeDasharray="2 2" />
          </svg>
        </button>
        <span className="ml-[33px] w-[60px] leading-[42px]">Hold:</span>
        <div className="flex gap-[6px]">
          {holds.map(([n, color]) => (
            <button key={n} className="w-[46px]">
              <span className="block h-[39px] rounded-[4px] border-2 border-[#575757] bg-[#484848] text-[20px] leading-[35px] text-[#c0c0c0]">{n}</span>
              <span className={`mt-[5px] block h-2 ${color}`} />
            </button>
          ))}
        </div>
      </div>

      <div className="mr-[21px] mt-[22px] border-2 border-[#545454]">
        <FrequencyChart />
      </div>

      <div className="mt-[60px] flex shrink-0 items-center">
        <label htmlFor="display" className="w-[83px]">Display:</label>
        <Dropdown id="display" value="Lines" className="w-[147px]" />
        <label htmlFor="channel" className="ml-[26px] w-[133px] whitespace-nowrap">Top Channel:</label>
        <Dropdown id="channel" value="Left" className="w-[230px]" />
        <PillButton className="ml-[25px] w-[210px]">Scan Selection</PillButton>
      </div>

      <button className="mt-[12px] flex shrink-0 items-center gap-[23px] text-left font-semibold text-[#f0f0f0]">
        <Chevron />
        Advanced
      </button>
    </aside>
  );
}

/* ---------- page ---------- */

function Callouts() {
  return (
    <svg className="pointer-events-none absolute inset-0 h-full w-full" fill="none" stroke="#0be40b" strokeWidth="6" strokeLinejoin="round">
      <rect x="1946" y="7" width="282" height="46" />
      <rect x="925" y="527" width="431" height="50" />
      <rect x="1247" y="1210" width="391" height="77" />
      <rect x="1754" y="1283" width="100" height="615" />
      <path d="M742 976L1211 832" strokeLinecap="round" />
      <g fill="#00ea00" stroke="none">
        <path d="M1389 1741 Q1560 1738 1679 1730 L1674 1713 L1733 1743 L1674 1773 L1679 1756 Q1560 1750 1389 1747 Q1385 1744 1389 1741Z" />
        <path d="M1995 1973.500 Q2220 1974 2372 1968.500 L2368 1952 L2426 1983 L2368 2012 L2372 1995 Q2220 1984 1995 1979 Q1991 1976 1995 1973.500Z" />
      </g>
    </svg>
  );
}

export default function App() {
  return (
    <div className="relative flex h-screen overflow-hidden bg-[#424242] font-['Noto_Sans',sans-serif] text-[21px]">
      <main className="mr-[9px] flex min-w-0 flex-1 flex-col bg-[#585858]">
        <div className="h-[54px] shrink-0 bg-[#4b4b4b]" />

        <div className="flex h-[106px] shrink-0 items-start pt-[14px]">
          <OverviewStrip />
          <div className="flex w-[156px] shrink-0 items-center pl-[18px] pt-3">
            <button aria-label="Zoom out full">
              <svg width="36" height="34" viewBox="0 0 36 34" fill="#c6c6c6">
                <path d="M18 0l4 5h-8zM18 34l-4-5h8zM0 17l5-5v10zM36 17l-5-5v10z" />
                <circle cx="17.500" cy="15" r="7.500" fill="none" stroke="#c6c6c6" strokeWidth="2.500" />
                <path d="M14 15h7" stroke="#c6c6c6" strokeWidth="2.500" />
                <path d="M23 21l9 9" stroke="#c6c6c6" strokeWidth="4" />
              </svg>
            </button>
            <button aria-label="Show track list" className="ml-[25px]">
              <svg width="29" height="27" viewBox="0 0 29 27" fill="none" stroke="#c6c6c6" strokeWidth="2.500">
                <path d="M1.300 1.300h26.400v24.400H1.300zM1.300 6h26.400M1.300 13h26.400M1.300 18.500h26.400" />
              </svg>
            </button>
          </div>
        </div>

        <div className="flex h-[50px] shrink-0">
          <div className="min-w-0 flex-1 overflow-hidden border-r-2 border-t-2 border-[#262626] bg-[#4c4c4c]">
            <TimeRuler />
          </div>
          <div className="flex w-[161px] shrink-0 items-start pl-[21px] pt-[10px]">
            <button aria-label="Snapping" className="mt-[2px]">
              <svg width="26" height="25" viewBox="0 0 26 25" fill="none">
                <path d="M7 24C3 18 3 15 3 12.500C3 7 7 3.500 13 3.500S23 7 23 12.500C23 15 23 18 19 24" stroke="#c6c6c6" strokeWidth="6" />
                <path d="M0 17.500l9-1.500M26 17.500l-9-1.500" stroke="#585858" strokeWidth="1.500" />
              </svg>
            </button>
            <button aria-label="Add marker" className="ml-[22px]">
              <svg width="15" height="28" viewBox="0 0 15 28" fill="#c6c6c6"><path d="M0 0h15v8l-5 5H5L0 8z" /><path d="M6.500 8h2v20h-2z" /></svg>
            </button>
          </div>
        </div>

        <div className="mr-[13px] flex min-h-0 flex-1 flex-col border-r-2 border-t-2 border-[#262626]">
          <div className="flex h-[1062px] shrink-0">
            <div className="min-w-0 flex-1 border-r-2 border-[#303030]"><Waveforms /></div>
            <DecibelScale />
          </div>
          <div className="flex h-[18px] shrink-0 items-center justify-between bg-[#595959] pl-[339px] pr-[34px]">
            <svg width="49" height="8" viewBox="0 0 49 8">
              <path d="M0 1.500H49M0 6.500H49" stroke="#1e1e1e" strokeWidth="2" strokeDasharray="2 2" />
              <path d="M2 1.500H49M2 6.500H49" stroke="#bdbdbd" strokeWidth="2" strokeDasharray="2 2" />
            </svg>
            <svg width="12" height="7" viewBox="0 0 12 7"><path d="M0 0h12L6 7z" fill="#a4a4a4" /></svg>
          </div>
          <div className="flex min-h-0 flex-1">
            <div className="min-w-0 flex-1 border-r-2 border-[#303030]"><Spectrogram /></div>
            <HertzScale />
          </div>
        </div>
      </main>

      <FrequencyPanel />
      <EqualizerWindow />
      <Callouts />
    </div>
  );
}
